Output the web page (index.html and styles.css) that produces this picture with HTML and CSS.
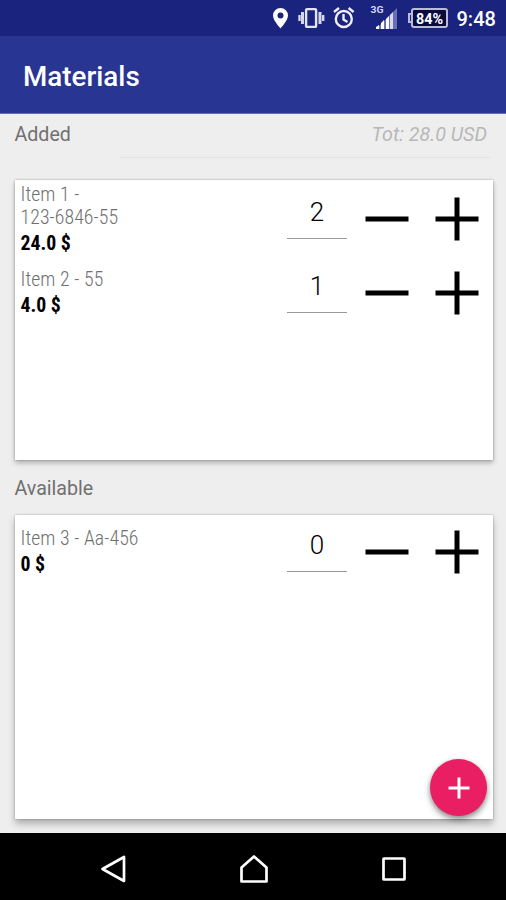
FILE: index.html
```html
<!DOCTYPE html>
<html lang="en">
<head>
<meta charset="utf-8">
<title>Materials</title>
<link rel="stylesheet" href="styles.css">
</head>
<body>
<div class="screen">
  <header class="status">
    <svg class="status-icons" width="190" height="36" viewBox="266 0 190 36" aria-hidden="true">
      <path fill="#fff" fill-rule="evenodd" d="M279.500 8a7.500 7.500 0 0 0-7.500 7.600c0 5 7.500 12.900 7.500 12.900s7.500-7.900 7.500-12.900A7.500 7.500 0 0 0 279.500 8Zm0 4.500a3 3 0 1 1 0 6a3 3 0 0 1 0-6Z"/>
      <rect x="305.100" y="9.100" width="10" height="17.800" rx="1" fill="none" stroke="#e4e5f3" stroke-width="2.400"/>
      <path d="M301.500 12v12M319 12v12" fill="none" stroke="#d4d6ea" stroke-width="3"/>
      <path d="M298.500 15v6M322.200 15v6" fill="none" stroke="#d4d6ea" stroke-width="2.400"/>
      <g fill="none" stroke="#eeeef8" stroke-width="2.400">
        <circle cx="342.800" cy="19" r="8"/>
        <path d="M333 12l5-4M347.600 8l5 4M342.500 14v5.500l4 2.500"/>
      </g>
      <path fill="#6970b5" d="M396 8v21h-21Z"/>
      <path fill="#fff" d="M375 29v-2l3-2v4ZM380 29v-6l3-3v9ZM385 29v-10l3-3v13Z"/>
      <path fill="#d8daeb" d="M389 29V15l3-3v17Z"/>
      <rect x="411" y="9" width="35" height="18" rx="2" fill="#080b40" stroke="#b9bcd4" stroke-width="2"/>
      <path d="M410 14h-2v8h2" fill="none" stroke="#b9bcd4" stroke-width="2"/>
      <text class="network" x="369.500" y="12.500" textLength="13" lengthAdjust="spacingAndGlyphs">3G</text>
      <text class="battery" x="415" y="23.500" textLength="27" lengthAdjust="spacingAndGlyphs">84%</text>
    </svg>
    <span class="clock">9:48</span>
  </header>
  <div class="appbar"><h1>Materials</h1></div>
  <main>
    <div class="section-head added"><h2>Added</h2><div class="total">Tot: 28.0 USD</div></div>
    <section class="card card-added">
      <div class="row">
        <div class="item"><div class="name">Item 1 -<br>123-6846-55</div><div class="price">24.0 $</div></div>
        <div class="count">2</div>
        <svg class="btn" viewBox="0 0 44 44"><path d="M.5 22h43"/></svg>
        <svg class="btn" viewBox="0 0 44 44"><path d="M.5 22h43M22 .5v43"/></svg>
      </div>
      <div class="row">
        <div class="item"><div class="name">Item 2 - 55</div><div class="price">4.0 $</div></div>
        <div class="count">1</div>
        <svg class="btn" viewBox="0 0 44 44"><path d="M.5 22h43"/></svg>
        <svg class="btn" viewBox="0 0 44 44"><path d="M.5 22h43M22 .5v43"/></svg>
      </div>
    </section>
    <div class="section-head available"><h2>Available</h2></div>
    <section class="card card-available">
      <div class="row">
        <div class="item"><div class="name">Item 3 - Aa-456</div><div class="price">0 $</div></div>
        <div class="count">0</div>
        <svg class="btn" viewBox="0 0 44 44"><path d="M.5 22h43"/></svg>
        <svg class="btn" viewBox="0 0 44 44"><path d="M.5 22h43M22 .5v43"/></svg>
      </div>
      <div class="fab"><svg width="22" height="22" viewBox="0 0 22 22"><path d="M.5 11h21M11 .5v21"/></svg></div>
    </section>
  </main>
  <nav class="navbar">
    <svg width="30" height="34" viewBox="0 0 30 34"><path d="M26 5v24L4.500 17Z"/></svg>
    <svg width="30" height="34" viewBox="0 0 30 34"><path d="M2.500 29.500V15.500L15 4.500l12.500 11v14Z"/></svg>
    <svg width="30" height="34" viewBox="0 0 30 34"><rect x="4.500" y="6.500" width="21" height="21" rx=".5"/></svg>
  </nav>
</div>
</body>
</html>
```
FILE: styles.css
```css
* { box-sizing: border-box; }
body { margin: 0; font-family: Roboto, "Liberation Sans", sans-serif; }
h1, h2 { margin: 0; }
.screen { width: 506px; height: 900px; display: flex; flex-direction: column; background: #eee; overflow: hidden; }
.status { height: 36px; flex: none; display: flex; justify-content: flex-end; align-items: center; padding-right: 10.500px; background: #1a237e; color: #fff; }
.status-icons { flex: none; }
.network { font-size: 9px; font-weight: 700; fill: #d5d7ea; }
.battery { font-size: 15px; font-weight: 700; fill: #fff; }
.clock { width: 39px; font-size: 20px; font-weight: 500; line-height: 36px; padding-top: 2px; white-space: nowrap; }
.appbar { height: 78px; flex: none; display: flex; align-items: center; padding: 5px 0 0 23px; background: #283593; color: #fff; border-bottom: 1px solid #6971b3; }
h1 { font-size: 27.800px; font-weight: 500; line-height: 32px; }
main { flex: 1; display: flex; flex-direction: column; padding: 0 13px 0 14.500px; }
.section-head { display: flex; justify-content: space-between; flex: none; }
h2 { font-size: 19.600px; font-weight: 400; line-height: 24px; color: #707070; }
.added { height: 66px; padding-top: 9px; }
.available { height: 55px; padding-top: 17px; }
.total { width: 370px; height: 35px; margin-right: 3px; padding-right: 3px; text-align: right; font-size: 19.700px; font-style: italic; line-height: 24px; color: #b8b8b8; border-bottom: 1px solid #e4e4e4; }
.card { flex: none; position: relative; background: #fff; box-shadow: 0 3px 5px rgba(0,0,0,.26), 0 0 2px rgba(0,0,0,.3); }
.card-added { height: 280px; padding-top: 2px; }
.card-available { height: 304px; box-shadow: 0 5px 7px rgba(0,0,0,.26), 0 0 2px rgba(0,0,0,.3); }
.row { height: 74px; display: flex; align-items: center; padding: 0 14px 0 6px; }
.item { flex: 1; font-family: "Roboto Condensed", Roboto, sans-serif; font-stretch: condensed; font-size: 19.800px; line-height: 23px; padding-bottom: 1px; }
.name { color: #707070; font-weight: 350; letter-spacing: .07px; }
.price { margin-top: 3px; font-weight: 700; color: #000; }
.count { width: 60px; height: 52px; margin: 0 18px 12px 0; padding-top: 10px; text-align: center; font-size: 26px; font-weight: 350; line-height: 30px; color: #000; border-bottom: 1.500px solid #999; }
.btn { width: 44px; height: 44px; fill: none; stroke: #000; stroke-width: 5; }
.btn + .btn { margin-left: 26px; }
.fab { position: absolute; right: 6px; bottom: 3px; width: 57px; height: 57px; border-radius: 50%; background: #e91e63; display: grid; place-items: center; box-shadow: 0 4px 6px rgba(0,0,0,.35), 0 1px 4px rgba(0,0,0,.2); }
.fab svg { fill: none; stroke: #fff; stroke-width: 3; }
.navbar { height: 67px; flex: none; display: flex; justify-content: space-between; align-items: center; padding: 4px 97px 0 98px; background: #000; position: relative; }
.navbar svg { fill: none; stroke: #fff; stroke-width: 2.700; stroke-linejoin: round; }
```
